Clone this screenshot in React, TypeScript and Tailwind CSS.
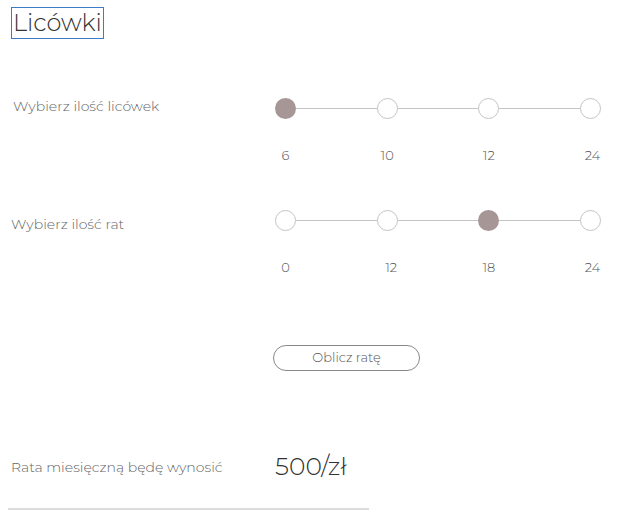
import React, { useState } from "react";

type SliderProps = {
  values: number[];
  selected: number;
  onSelect: (i: number) => void;
  labelShift?: string[];
};

const StepSlider = ({ values, selected, onSelect, labelShift = [] }: SliderProps) => {
  return (
    <div className="w-[326px]">
      <div className="flex items-center h-[22px]">
        {values.map((v, i) => (
          <React.Fragment key={v + "-" + i}>
            <button
              onClick={() => onSelect(i)}
              className={`w-[21px] h-[21px] rounded-full shrink-0 ${
                selected === i ? "bg-[#a69696]" : "bg-white border border-[#c4c4c4]"
              }`}
            />
            {i < values.length - 1 && <div className="flex-1 h-px bg-[#c4c4c4]" />}
          </React.Fragment>
        ))}
      </div>
      <div className="flex justify-between mt-[28px]">
        {values.map((v, i) => (
          <div key={v + "-" + i} className="w-[21px] flex justify-center">
            <span className={`text-[13px] leading-[16px] text-[#555] whitespace-nowrap ${labelShift[i] || ""}`}>{v}</span>
          </div>
        ))}
      </div>
    </div>
  );
};

const App = () => {
  const [veneers, setVeneers] = useState(0);
  const [installments, setInstallments] = useState(2);

  return (
    <div className="w-[626px] h-[530px] bg-white font-['Montserrat','Open_Sans',sans-serif] font-light text-[#555] overflow-hidden">
      {/* tytuł */}
      <div className="pt-[7px] pl-[11px]">
        <h1 className="inline-block border border-[#3c7bc6] text-[24px] leading-[30px] px-px text-[#333] font-light">
          Licówki
        </h1>
      </div>

      {/* ilość licówek */}
      <div className="flex items-start mt-[58px]">
        <div className="w-[275px] pl-[13px] text-[14px] leading-[18px] text-[#666]">Wybierz ilość licówek</div>
        <StepSlider values={[6, 10, 12, 24]} selected={veneers} onSelect={setVeneers} labelShift={["", "", "", "translate-x-[2px]"]} />
      </div>

      {/* ilość rat */}
      <div className="flex items-start mt-[46px]">
        <div className="w-[275px] pl-[11px] pt-[6px] text-[14px] leading-[18px] text-[#666]">Wybierz ilość rat</div>
        <StepSlider
          values={[0, 12, 18, 24]}
          selected={installments}
          onSelect={setInstallments}
          labelShift={["", "translate-x-[4px]", "", "translate-x-[2px]"]}
        />
      </div>

      {/* przycisk */}
      <div className="pl-[273px] mt-[70px]">
        <button className="w-[147px] h-[26px] rounded-full border border-[#888] text-[13px] text-[#555]">
          Oblicz ratę
        </button>
      </div>

      {/* wynik */}
      <div className="flex items-center mt-[81px] h-[30px]">
        <div className="w-[275px] pl-[11px] text-[14px] text-[#666]">Rata miesięczną będę wynosić</div>
        <div className="text-[25px] text-[#333]">500/zł</div>
      </div>

      <div className="ml-[8px] mt-[26px] w-[361px] h-[2px] bg-[#dcdcdc]" />
    </div>
  );
};

export default App;
